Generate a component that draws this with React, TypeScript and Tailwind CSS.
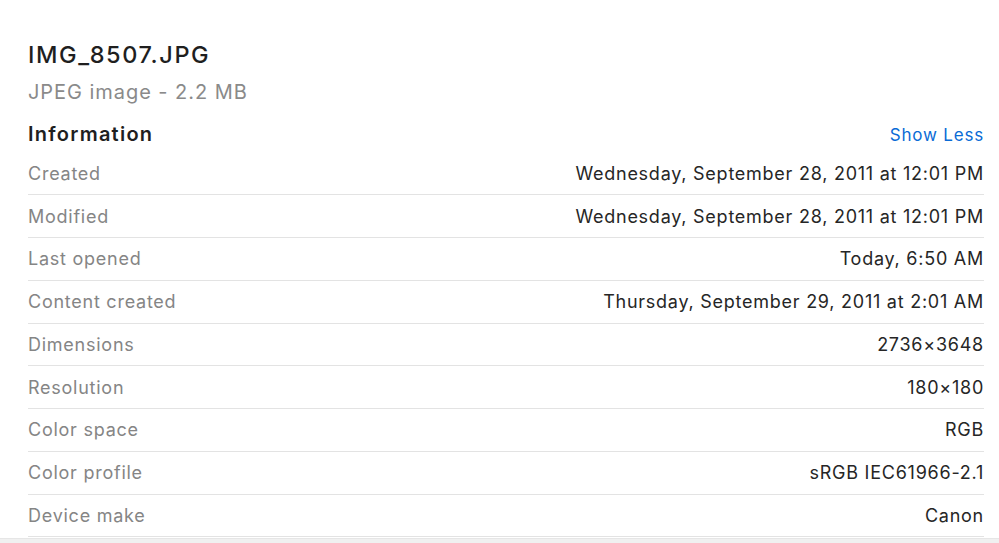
import React from "react";

const rows: [string, string][] = [
  ["Created", "Wednesday, September 28, 2011 at 12:01 PM"],
  ["Modified", "Wednesday, September 28, 2011 at 12:01 PM"],
  ["Last opened", "Today, 6:50 AM"],
  ["Content created", "Thursday, September 29, 2011 at 2:01 AM"],
  ["Dimensions", "2736×3648"],
  ["Resolution", "180×180"],
  ["Color space", "RGB"],
  ["Color profile", "sRGB IEC61966-2.1"],
  ["Device make", "Canon"],
];

export default function App() {
  return (
    <div
      className="w-[999px] h-[543px] bg-white overflow-hidden flex flex-col"
      style={{ fontFamily: "Inter, 'Noto Sans', sans-serif" }}
    >
      <div className="flex flex-col pl-[28px] pr-[15px] pt-[40px] flex-1">
        <div className="text-[23.5px] leading-[30px] text-[#1f1f1f] font-medium tracking-[1.6px]">
          IMG_8507.JPG
        </div>
        <div className="text-[20px] leading-[26px] text-[#8a8a8a] mt-[9px] tracking-[0.95px]">
          JPEG image - 2.2 MB
        </div>
        <div className="flex items-center justify-between mt-[15px] h-[27px]">
          <div className="text-[20px] leading-[26px] font-semibold text-[#1f1f1f] tracking-[1.25px]">
            Information
          </div>
          <div className="text-[17px] leading-[24px] text-[#0a6bd6] tracking-[0.8px] mt-[2px]">
            Show Less
          </div>
        </div>
        <div className="flex flex-col mt-[5.5px]">
          {rows.map(([k, v]) => (
            <div
              key={k}
              className="h-[42.75px] flex items-center justify-between border-b border-[#e3e3e3] text-[18px] tracking-[0.75px]"
            >
              <span className="text-[#858585]">{k}</span>
              <span className="text-[#262626]">{v}</span>
            </div>
          ))}
        </div>
      </div>
      <div className="h-[5px] bg-[#f0f0f0] border-t border-[#e6e6e6]" />
    </div>
  );
}
